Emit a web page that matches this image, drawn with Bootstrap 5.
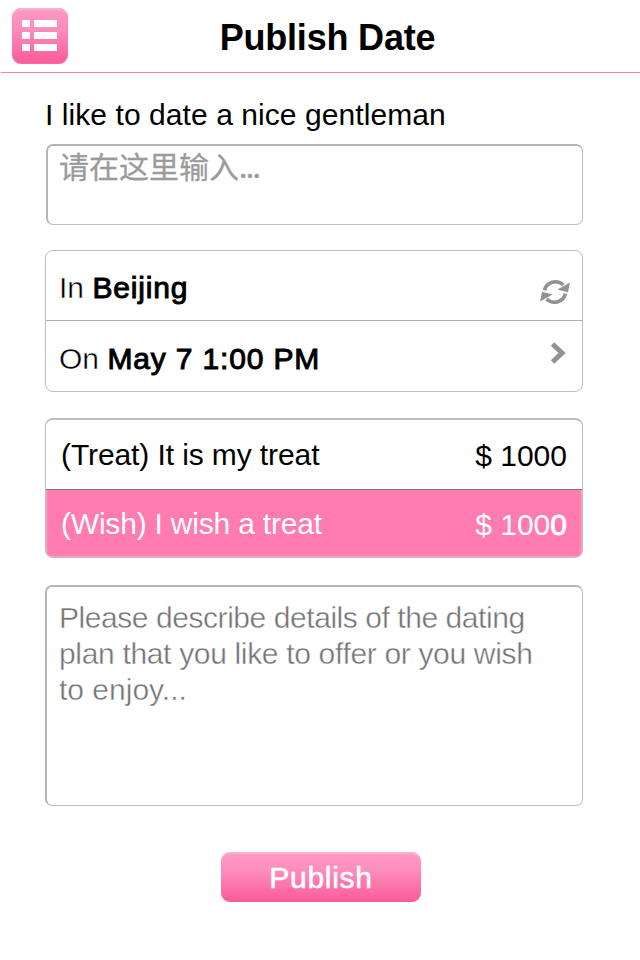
<!DOCTYPE html>
<html lang="en">
<head>
<meta charset="utf-8">
<meta name="viewport" content="width=device-width, initial-scale=1">
<title>Publish Date</title>
<link href="https://cdn.jsdelivr.net/npm/bootstrap@5.3.0/dist/css/bootstrap.min.css" rel="stylesheet">
<style>
  body { font-family: "Liberation Sans", "Noto Sans CJK SC", sans-serif; font-size: 30px; line-height: 36px; color: #000; background: #fff; height: 960px; overflow: hidden; }
  .topbar { height: 73px; border-bottom: 1px solid #fb7fb0; margin-left: 1px; padding: 8px 12px 0 11px; }
  .topbar h1 { font-size: 36px; line-height: 42px; font-weight: 700; padding: 9px 0 0 15px; letter-spacing: -.2px; }
  .menu-btn { width: 56px; height: 56px; border: 0; border-radius: 9px; background: linear-gradient(#fd97c3, #fd8fbd 35%, #fb5a98); box-shadow: inset 0 3px 2px -1px #fdb5d3, inset 0 0 1px 1px rgba(255,130,180,.5); }
  .topbar-space { width: 56px; }
  .content { padding: 24px 57px 0 45px; }
  .prompt { letter-spacing: .07px; margin: 0 0 11px; height: 36px; }
  .box { border: 1px solid #bdbdbd; border-radius: 8px; background: #fff; color: #000; font-size: 30px; line-height: 36px; }
  .sunk { border: 1px solid #bdbdbd; border-top: 2px solid #b5b5b5; border-left: 2px solid #b5b5b5; border-radius: 7px; background: #fff; font-size: 30px; }
  .say { height: 81px; margin: 0 0 26px 1px; padding: 1px 11px; color: #9b9b9b; font-family: "Noto Sans CJK SC", sans-serif; line-height: 36px; -webkit-text-stroke: .3px #9b9b9b; }
  .dots { letter-spacing: -1.6px; }
  .where { height: 142px; margin: -1px 0 26px; }
  .where .entry { height: 70px; padding: 0 12px 0 13px; }
  .where .entry:first-child { border-bottom: 1px solid #adadad; }
  .where .entry > div { padding-top: 4px; }
  .where .entry:last-child > div { padding-top: 6px; }
  .refresh { margin-top: 13px; }
  .chevron { margin: 0 1px 6px 0; }
  .thin { -webkit-text-stroke: .4px #fff; }
  .value { -webkit-text-stroke: 1px #000; letter-spacing: .85px; }
  .pay { height: 140px; margin-bottom: 27px; overflow: hidden; border-width: 2px 1px 1px 1px; }
  .pay .entry { height: 69px; padding: 0 15px 0 15px; }
  .pay .wish { height: 68px; border-top: 1px solid #777; background: #ff7bb0; color: #fff; box-shadow: inset 0 -2px 2px -1px #fca8ca, inset 2px 0 2px -1px #fca8ca, inset -2px 0 2px -1px #fca8ca; }
  .treat-text { letter-spacing: -.1px; }
  .wish-text { letter-spacing: -.2px; }
  .price { padding-top: 2px; }
  .stout { -webkit-text-stroke: .9px #fff; }
  .plan { height: 221px; padding: 13px 12px; color: #747474; line-height: 36px; margin-bottom: 46px; }
  .line { white-space: nowrap; letter-spacing: -.44px; }
  .line + .line { letter-spacing: -.33px; }
  .line:last-child { letter-spacing: 0; }
  .publish { width: 200px; height: 50px; margin-left: 176px; border: 0; border-radius: 9px; padding: 2px 0 0; color: #fff; font-size: 30px; line-height: 48px; letter-spacing: .7px; -webkit-text-stroke: .6px #fff; background: linear-gradient(#fd97c3, #fd8fbd 35%, #fb5a98); box-shadow: inset 0 3px 2px -1px #fdb5d3; }
</style>
<script src="https://cdn.jsdelivr.net/npm/bootstrap@5.3.0/dist/js/bootstrap.bundle.min.js"></script>
</head>
<body>
<header class="topbar d-flex justify-content-between align-items-start">
  <button class="menu-btn p-0 d-flex" type="button" aria-label="Menu">
    <svg width="56" height="56" viewBox="0 0 56 56" fill="#fff">
      <path d="M10 12h8v7h-8zM22 12h23v7H22zM10 24h8v7h-8zM22 24h23v7H22zM10 36h8v7h-8zM22 36h23v7H22z"/>
    </svg>
  </button>
  <h1 class="m-0">Publish Date</h1>
  <span class="topbar-space flex-shrink-1"></span>
</header>
<main class="content">
  <p class="prompt">I like to date a nice gentleman</p>
  <div class="sunk say">请在这里输入<span class="dots">...</span></div>

  <div class="box where">
    <div class="entry d-flex justify-content-between align-items-center">
      <div><span class="thin">In</span> <span class="value">Beijing</span></div>
      <svg class="refresh" width="30" height="26" viewBox="0 0 30 26">
        <g fill="none" stroke="#929292" stroke-width="3.6">
          <path d="M4.600 11.300A11 10.300 0 0 1 23.300 6"/>
          <path d="M25.400 14.700A11 10.300 0 0 1 6.700 20"/>
        </g>
        <path fill="#929292" d="M29.900 3.400 28 13.200 17.400 10.600zM.1 22.600 2 12.800 12.600 15.400z"/>
      </svg>
    </div>
    <div class="entry d-flex justify-content-between align-items-center">
      <div><span class="thin">On</span> <span class="value">May 7 1:00 PM</span></div>
      <svg class="chevron" width="20" height="24" viewBox="0 0 20 24" fill="none" stroke="#929292" stroke-width="5">
        <path d="M3.500 3 13 12 3.500 21"/>
      </svg>
    </div>
  </div>

  <div class="box pay">
    <div class="entry d-flex justify-content-between align-items-center"><span class="treat-text">(Treat) It is my treat</span><span class="price">$ 1000</span></div>
    <div class="entry wish d-flex justify-content-between align-items-center"><span class="wish-text">(Wish) I wish a treat</span><span class="price">$ 100<span class="stout">0</span></span></div>
  </div>

  <div class="sunk plan thin"><div class="line">Please describe details of the dating</div><div class="line">plan that you like to offer or you wish</div><div class="line">to enjoy...</div></div>

  <button class="publish d-block" type="button">Publish</button>
</main>
</body>
</html>
